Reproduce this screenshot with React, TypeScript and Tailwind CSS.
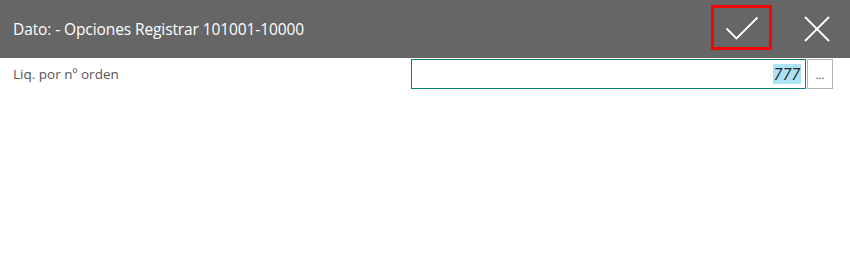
import React from "react";

export default function App() {
  return (
    <div className="w-[850px] h-[267px] bg-white" style={{ fontFamily: '"Open Sans", "Noto Sans", sans-serif' }}>
      <div className="h-[58px] bg-[#666666] flex items-center pl-[13px] pr-[19px]">
        <div className="text-white text-[15.5px] flex-1 tracking-[-0.1px] pt-[2px]">Dato: - Opciones Registrar 101001-10000</div>
        <div className="w-[61px] h-[45px] mb-[3px] border-[3px] border-[#ff0000] flex items-center justify-center">
          <svg width="34" height="26" viewBox="0 0 34 26" fill="none">
            <path d="M1.5 13.5 L11.5 23.5 L32.5 2.5" stroke="white" strokeWidth="1.8" />
          </svg>
        </div>
        <div className="ml-[31px] w-[28px] h-[28px] flex items-center justify-center">
          <svg width="26" height="26" viewBox="0 0 26 26" fill="none">
            <path d="M1 1 L25 25 M25 1 L1 25" stroke="white" strokeWidth="1.8" />
          </svg>
        </div>
      </div>
      <div className="flex items-center h-[30px] pl-[13px] pr-[17px] mt-[1px]">
        <div className="flex-1 text-[13.5px] text-[#555555] pt-[1px]">Liq. por nº orden</div>
        <div className="w-[395px] h-[30px] border border-[#008080] flex items-center justify-end pr-[4px]">
          <span className="bg-[#ade1f5] text-[#222222] text-[16px] italic leading-[20px] px-[1px]">777</span>
        </div>
        <div className="ml-[1px] w-[26px] h-[30px] border border-[#b3b3b3] flex items-center justify-center text-[11px] text-[#333] pt-[3px]">...</div>
      </div>
    </div>
  );
}
